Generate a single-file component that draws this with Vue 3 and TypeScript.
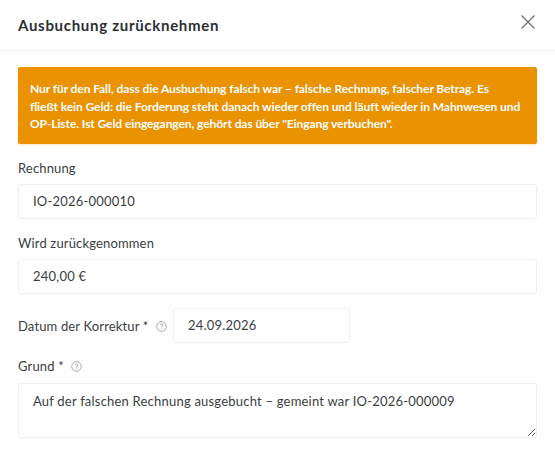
<script setup lang="ts">
const alertLines = [
  'Nur für den Fall, dass die Ausbuchung falsch war – falsche Rechnung, falscher Betrag. Es',
  'fließt kein Geld: die Forderung steht danach wieder offen und läuft wieder in Mahnwesen und',
  'OP-Liste. Ist Geld eingegangen, gehört das über "Eingang verbuchen".',
]
</script>

<template>
  <div class="modal">
    <header class="head">
      <h1 class="title">Ausbuchung zurücknehmen</h1>
      <button class="close" type="button" aria-label="Schließen">
        <svg width="14" height="14" viewBox="0 0 14 14">
          <path d="M0.5 0.5 L13.5 13.5 M13.5 0.5 L0.5 13.5" />
        </svg>
      </button>
    </header>
    <div class="body">
      <div class="alert">
        <div v-for="line in alertLines" :key="line">{{ line }}</div>
      </div>
      <div class="field">
        <label class="label">Rechnung</label>
        <input class="input" value="IO-2026-000010" readonly />
      </div>
      <div class="field">
        <label class="label">Wird zurückgenommen</label>
        <input class="input" value="240,00 €" readonly />
      </div>
      <div class="inline">
        <label class="label flat">Datum der Korrektur *
          <svg class="help" viewBox="0 0 12 12" width="11" height="11">
            <circle cx="6" cy="6" r="5.2" />
            <path d="M4.5 4.7 C4.5 3.7 5.2 3.2 6 3.2 C6.9 3.2 7.5 3.8 7.5 4.5 C7.5 5.5 6 5.6 6 6.9 M6 8.2 V9" />
          </svg>
        </label>
        <input class="input date" value="24.09.2026" readonly />
      </div>
      <div class="field last">
        <label class="label">Grund *
          <svg class="help" viewBox="0 0 12 12" width="11" height="11">
            <circle cx="6" cy="6" r="5.2" />
            <path d="M4.5 4.7 C4.5 3.7 5.2 3.2 6 3.2 C6.9 3.2 7.5 3.8 7.5 4.5 C7.5 5.5 6 5.6 6 6.9 M6 8.2 V9" />
          </svg>
        </label>
        <textarea class="input area" readonly>Auf der falschen Rechnung ausgebucht – gemeint war IO-2026-000009</textarea>
      </div>
    </div>
  </div>
</template>

<style scoped>
.modal {
  width: 555px;
  height: 452px;
  overflow: hidden;
  background: #fff;
  color: #32363a;
  font-family: "Lato", "Noto Sans", sans-serif;
  font-size: 13px;
}
.head {
  height: 51px;
  box-sizing: border-box;
  border-bottom: 1px solid #f1f2f4;
  display: flex;
  align-items: center;
  justify-content: space-between;
  padding: 0 20px 0 18px;
}
.title {
  margin: 0;
  font-size: 15px;
  font-weight: 700;
  letter-spacing: 0.7px;
  color: #2b2f33;
}
.close {
  border: 0;
  background: none;
  padding: 0;
  margin-bottom: 7px;
  display: flex;
}
.close path {
  stroke: #6f7377;
  stroke-width: 1.3;
  fill: none;
}
.body {
  padding: 16px 18px 0;
  display: flex;
  flex-direction: column;
}
.alert {
  box-sizing: border-box;
  height: 77px;
  background: #ea9200;
  color: #fff;
  border-radius: 2px;
  padding: 13px 12px 12px;
  font-size: 12px;
  font-weight: 700;
  letter-spacing: -0.08px;
  line-height: 17.6px;
  white-space: nowrap;
  margin-bottom: 16px;
  box-shadow: 0 1px 2px rgba(234, 146, 0, 0.25);
}
.field {
  display: flex;
  flex-direction: column;
  margin-bottom: 16px;
}
.label {
  display: block;
  height: 16px;
  line-height: 16px;
  margin-bottom: 8px;
  font-size: 13px;
  letter-spacing: 0.15px;
  color: #3a3e42;
}
.flat {
  margin: 0;
}
.help {
  vertical-align: -1px;
  margin-left: 4px;
}
.help circle,
.help path {
  fill: none;
  stroke: #9a9da0;
  stroke-width: 1;
}
.input {
  box-sizing: border-box;
  height: 35px;
  width: 100%;
  border: 1px solid #eceef0;
  border-radius: 3px;
  background: #fff;
  color: #3a3e42;
  padding: 0 14px 2px;
  font: inherit;
  font-size: 13px;
  letter-spacing: 0.21px;
  outline: none;
}
.inline {
  display: flex;
  align-items: center;
  gap: 6px;
  margin-top: -2px;
  margin-bottom: 15px;
}
.date {
  width: 177px;
}
.last .label {
  margin-bottom: 9px;
}
.area {
  height: 55px;
  padding: 8px 14px;
  line-height: 18px;
  resize: vertical;
  display: block;
}
</style>
